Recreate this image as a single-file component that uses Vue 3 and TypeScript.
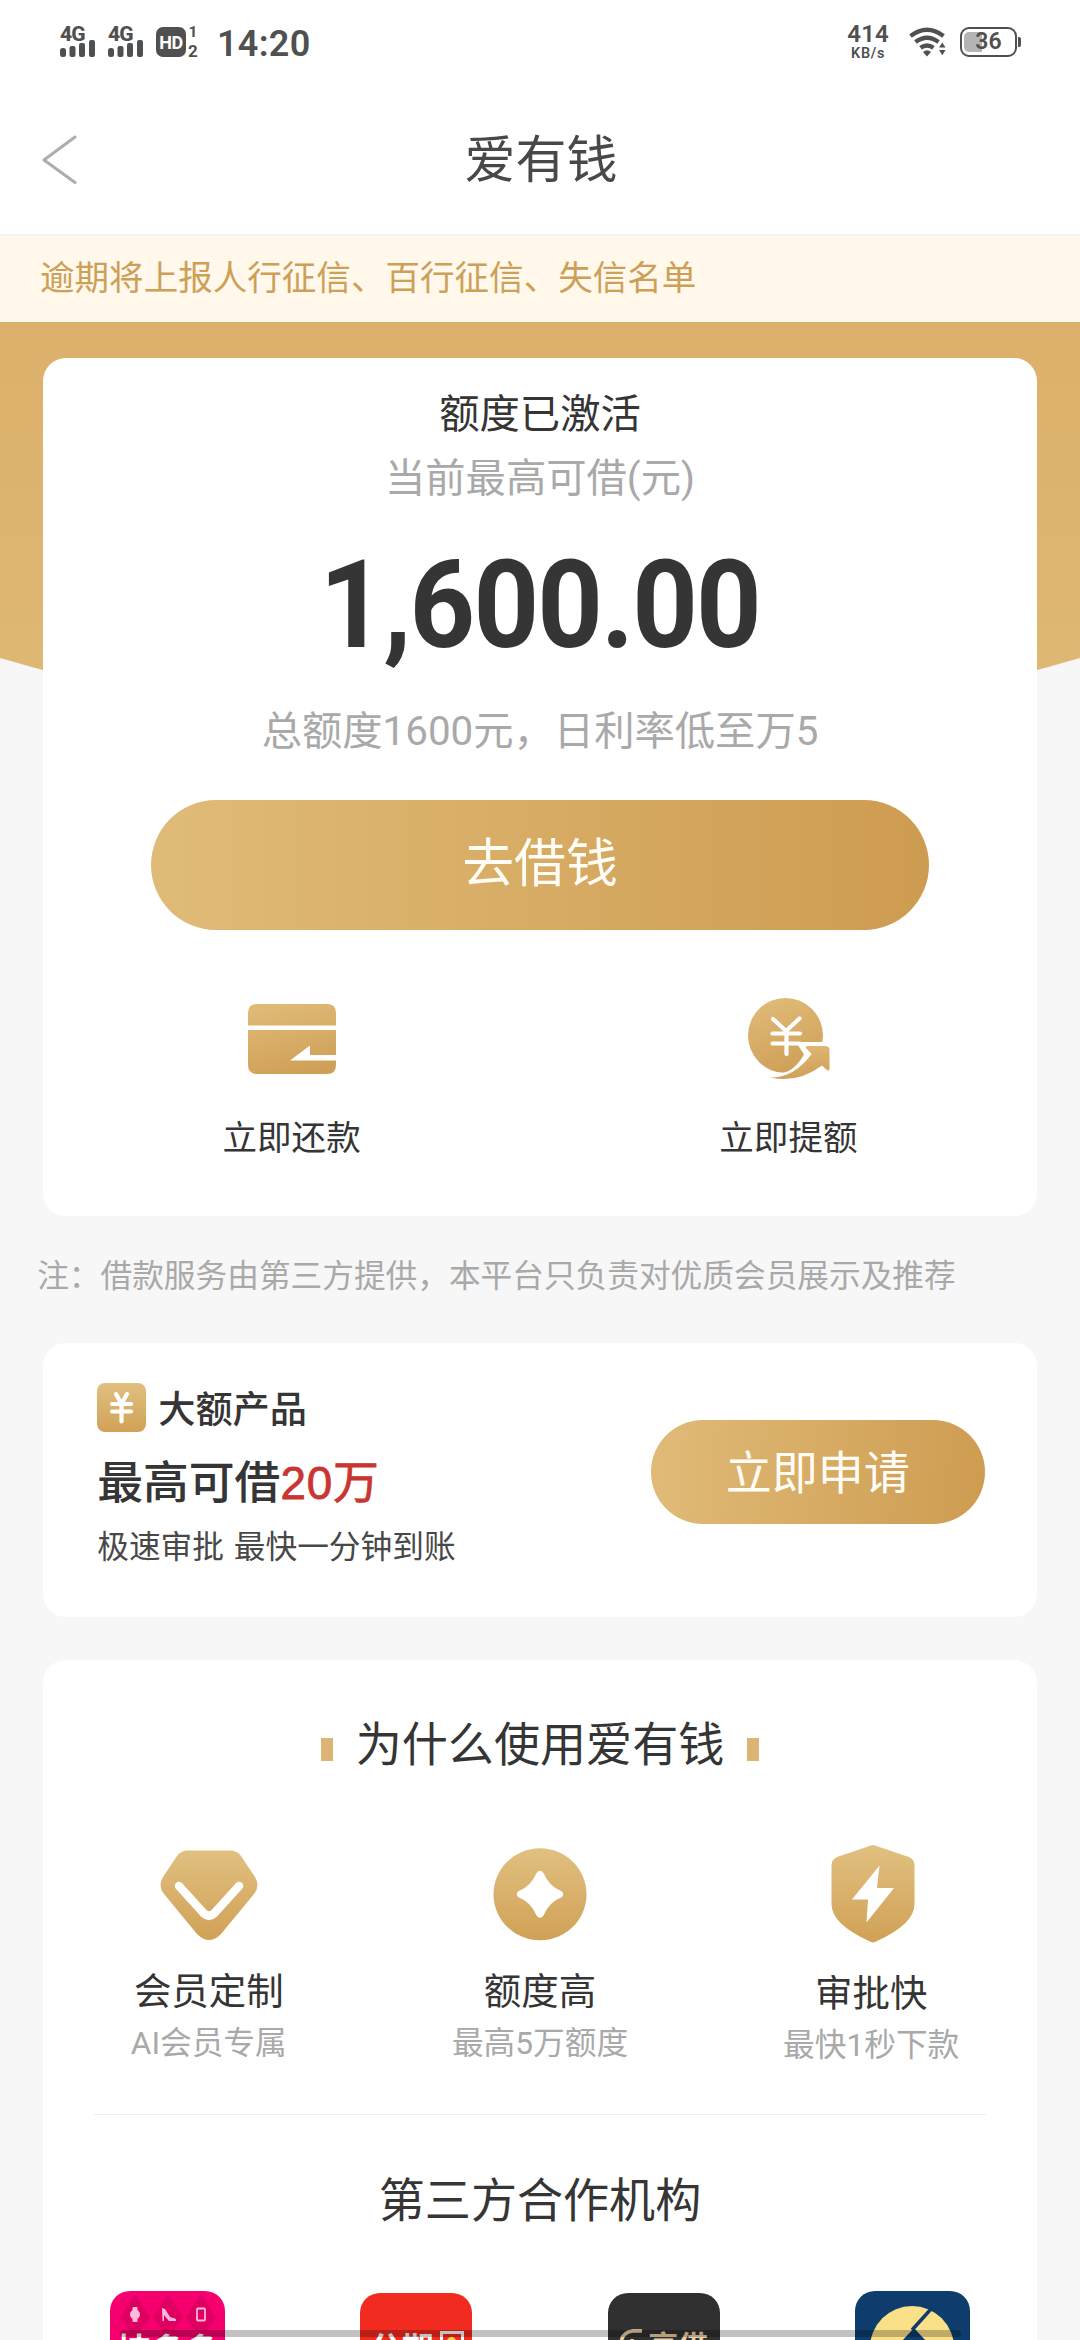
<script setup lang="ts">
interface Benefit {
  icon: 'diamond' | 'star' | 'shield'
  title: string
  note: string
}

const signals: number[] = [1, 2]

const benefits: Benefit[] = [
  { icon: 'diamond', title: '会员定制', note: 'AI会员专属' },
  { icon: 'star', title: '额度高', note: '最高5万额度' },
  { icon: 'shield', title: '审批快', note: '最快1秒下款' },
]
</script>

<template>
  <div class="page">
    <svg class="defs" width="0" height="0" aria-hidden="true">
      <defs>
        <linearGradient id="gold" x1="0.35" y1="0" x2="0.65" y2="1">
          <stop offset="0" stop-color="#dfba76" />
          <stop offset="1" stop-color="#cf9f57" />
        </linearGradient>
        <linearGradient id="goldSoft" x1="0" y1="0" x2="0" y2="1">
          <stop offset="0" stop-color="#e1c080" />
          <stop offset="1" stop-color="#d0a156" />
        </linearGradient>
      </defs>
    </svg>

    <header class="status">
      <div class="status-left">
        <div v-for="s in signals" :key="s" class="signal">
          <span class="net">4G</span>
          <svg class="bars" width="35" height="17" viewBox="0 0 35 17">
            <rect x="0" y="8" width="6" height="9" rx="2.5" />
            <rect x="9.5" y="6" width="6" height="11" rx="2" />
            <rect x="19" y="3" width="6" height="14" rx="2" />
            <rect x="29" y="0" width="6" height="17" rx="2" />
          </svg>
        </div>
        <div class="hd"><span>HD</span></div>
        <div class="sims"><span>1</span><span class="second">2</span></div>
        <span class="clock">14:20</span>
      </div>
      <div class="status-right">
        <div class="speed"><b>414</b><i>KB/s</i></div>
        <svg class="wifi" width="38" height="30" viewBox="0 0 38 30">
          <g fill="none" stroke="#505050" stroke-width="4.300">
            <path d="M1.5 9 Q18 -3.5 34.500 9" />
            <path d="M6.500 15 Q18 6.500 29.500 15" />
            <path d="M11.500 20.800 Q18 16.200 24.500 20.800" />
          </g>
          <path d="M14 25 Q18 21.500 22 25 L18 29.500Z" fill="#505050" />
          <path d="M30 20.500 L33.300 15.500 L36.500 20.500Z M30 23 L33.300 28.200 L36.500 23Z" fill="#505050" />
        </svg>
        <div class="battery"><div class="level"></div><span>36</span></div>
        <div class="nub"></div>
      </div>
    </header>

    <nav class="nav">
      <svg class="back" width="36" height="52" viewBox="0 0 36 52">
        <path d="M33 3 L2 26 L33 48.500" fill="none" stroke="#adadad" stroke-width="3" stroke-linecap="round" stroke-linejoin="round" />
      </svg>
      <h1>爱有钱</h1>
    </nav>

    <div class="notice">逾期将上报人行征信、百行征信、失信名单</div>

    <main class="body">
      <svg class="hero" width="1080" height="420" viewBox="0 0 1080 420">
        <defs>
          <linearGradient id="heroFill" x1="0" y1="0" x2="0" y2="1">
            <stop offset="0" stop-color="#dbb06a" />
            <stop offset="1" stop-color="#dfb976" />
          </linearGradient>
        </defs>
        <path d="M0 0 H1080 V336 Q540 494 0 336Z" fill="url(#heroFill)" />
      </svg>

      <section class="card quota">
        <p class="active">额度已激活</p>
        <p class="hint">当前最高可借(元)</p>
        <p class="amount">1,600.00</p>
        <p class="rate">总额度1600元，日利率低至万5</p>
        <button class="borrow">去借钱</button>
        <div class="actions">
          <div class="action">
            <svg width="90" height="90" viewBox="0 0 90 90">
              <path d="M10 9 H80 Q89 9 89 18 V30.500 H1 V18 Q1 9 10 9Z M1 35 H89 V60 H63 V50.500 L43 65.500 H89 V70 Q89 79 80 79 H10 Q1 79 1 70Z" fill="url(#gold)" />
            </svg>
            <span>立即还款</span>
          </div>
          <div class="action">
            <svg width="90" height="90" viewBox="0 0 90 90">
              <ellipse cx="42.500" cy="40.500" rx="37.500" ry="37.500" fill="url(#gold)" />
              <path d="M26 90 V78 H38 Q51 77 61 59.500 L53 47 H90 V90Z" fill="#fff" />
              <path d="M27 82.500 Q51 83 68.600 59 L62.500 52.500 Q62.500 51 64.500 51 H82 Q86.500 51 86.500 55 V74.500 Q85.500 76 84 75 L79 70.500 Q55 88.500 27 82.500Z" fill="url(#gold)" />
              <path d="M30 24 L43 36 L56.500 23.500 M29.500 38.500 H57 M29.500 48.500 H57 M43.500 36 V59" fill="none" stroke="#fff" stroke-width="4.200" stroke-linecap="round" />
            </svg>
            <span>立即提额</span>
          </div>
        </div>
      </section>

      <p class="remark">注：借款服务由第三方提供，本平台只负责对优质会员展示及推荐</p>

      <section class="card promo">
        <div class="promo-text">
          <div class="promo-head">
            <svg width="49" height="49" viewBox="0 0 49 49">
              <rect width="49" height="49" rx="8" fill="url(#goldSoft)" />
              <path d="M19 11 L24.500 21 L30 11 M15 21 H34 M15 28.500 H34 M24.500 21 V38.500" fill="none" stroke="#fff" stroke-width="4.200" stroke-linecap="round" />
            </svg>
            <span>大额产品</span>
          </div>
          <p class="promo-main">最高可借<em>20万</em></p>
          <p class="promo-sub">极速审批 最快一分钟到账</p>
        </div>
        <button class="apply">立即申请</button>
      </section>

      <section class="card why">
        <h2><i></i><span>为什么使用爱有钱</span><i></i></h2>
        <div class="benefits">
          <div v-for="b in benefits" :key="b.icon" class="benefit" :class="b.icon">
            <svg v-if="b.icon === 'diamond'" width="100" height="100" viewBox="0 0 100 100">
              <path d="M29 6.500 H71 Q78 6.500 82 12 L96 33 Q101.500 42 95 50 L62 90 Q50 102 38 90 L5 50 Q-1.500 42 4 33 L18 12 Q22 6.500 29 6.500Z" fill="url(#goldSoft)" />
              <path d="M20 42 L45 69.500 Q50 74 55 69.500 L80 42" fill="none" stroke="#fff" stroke-width="8.500" stroke-linecap="round" />
            </svg>
            <svg v-else-if="b.icon === 'star'" width="100" height="100" viewBox="0 0 100 100">
              <ellipse cx="50" cy="50.300" rx="46.500" ry="46" fill="url(#goldSoft)" />
              <path d="M46.500 29 Q50 24.500 53.500 29 Q59 42.500 72 47.500 Q74.500 50 72 53 Q59 58 53.500 71.500 Q50 76 46.500 71.500 Q41 58 28 53 Q25.500 50 28 47.500 Q41 42.500 46.500 29Z" fill="#fff" />
            </svg>
            <svg v-else width="100" height="100" viewBox="0 0 100 100">
              <path d="M50 1.600 Q52 .6 54 1.600 L88 13 Q93.500 15.500 93.500 21 V60 Q93.500 80 56 97 Q52 99.800 48 97 Q10.500 80 10.500 60 V21 Q10.500 15.500 16 13Z" fill="url(#goldSoft)" />
              <path d="M58.500 21.500 L56 44 H73 L45.500 78.500 L47 55.500 H31Z" fill="#fff" />
            </svg>
            <strong>{{ b.title }}</strong>
            <small>{{ b.note }}</small>
          </div>
        </div>
        <hr />
        <h3>第三方合作机构</h3>
        <div class="partners">
          <div class="slot">
            <div class="logo pink">
              <svg width="115" height="40" viewBox="0 0 115 40">
                <path d="M25 3 L40 26 L25 48 L10 26Z M58 3 L73 26 L58 48 L43 26Z M91 3 L106 26 L91 48 L76 26Z" fill="#d6005c" opacity=".7" />
                <g fill="#ffb9da">
                  <rect x="22.500" y="16" width="5" height="15" rx="1" />
                  <circle cx="25" cy="23.500" r="5" />
                  <path d="M52 17 L55 18 L60 26 L66 28 V30 H59 L54 24 V30 H52.500Z" />
                </g>
                <rect x="87" y="17.500" width="8" height="12" rx="1" fill="none" stroke="#ffb9da" stroke-width="1.800" />
              </svg>
              <span>桔多多</span>
            </div>
          </div>
          <div class="slot">
            <div class="logo red"><span>分期</span><i><b></b></i></div>
          </div>
          <div class="slot">
            <div class="logo dark">
              <svg width="26" height="26" viewBox="0 0 26 26">
                <path d="M24 2 H15 Q3 3 3 16 M14 10 V20" fill="none" stroke="#ead0a8" stroke-width="3.500" />
              </svg>
              <span>高借</span>
            </div>
          </div>
          <div class="slot">
            <div class="logo navy">
              <svg width="115" height="52" viewBox="0 0 115 52">
                <circle cx="57" cy="57" r="42" fill="#fbe08a" />
                <path d="M59 37 L84 64 H34Z" fill="#0d3c6d" />
                <path d="M76 18 L57 39" fill="none" stroke="#0d3c6d" stroke-width="3.500" />
              </svg>
            </div>
          </div>
        </div>
      </section>
    </main>

    <div class="home-bar"></div>
  </div>
</template>

<style>
body {
  margin: 0;
  background: #f7f7f7;
}
</style>

<style scoped>
.page {
  position: relative;
  width: 1080px;
  height: 2340px;
  overflow: hidden;
  background: #f7f7f7;
  color: #353535;
  font-family: Roboto, "Noto Sans CJK SC", sans-serif;
}
.defs {
  position: absolute;
}
p, h1, h2, h3 {
  margin: 0;
  font-weight: 400;
}
svg {
  display: block;
  flex: none;
}
button {
  border: 0;
  padding: 0;
  color: #fffdf5;
  font-family: inherit;
}

/* status bar */
.status {
  display: flex;
  justify-content: space-between;
  height: 84px;
  padding: 0 59px 0 60px;
  background: #fff;
  color: #505050;
}
.status-left,
.status-right {
  display: flex;
  align-items: center;
}
.signal {
  width: 35px;
  height: 30px;
  margin-right: 13px;
}
.net {
  display: block;
  height: 14px;
  font-size: 21px;
  font-weight: 800;
  line-height: 15px;
  letter-spacing: -0.8px;
}
.bars {
  margin-top: -1px;
  fill: #505050;
}
.hd {
  width: 30px;
  height: 30px;
  border-radius: 7px;
  background: #505050;
  color: #fff;
  font-size: 18px;
  font-weight: 700;
  line-height: 31px;
  text-align: center;
  letter-spacing: -0.5px;
}
.sims {
  display: flex;
  flex-direction: column;
  justify-content: space-between;
  width: 10px;
  height: 30px;
  margin-left: 2px;
  font-size: 15.500px;
  font-weight: 700;
  line-height: 11px;
  text-align: center;
}
.sims .second {
  font-size: 17px;
}
.clock {
  margin-left: 19px;
  font-size: 36px;
  font-weight: 600;
  line-height: 84px;
  letter-spacing: 0.3px;
  padding-top: 3px;
}
.speed {
  display: flex;
  flex-direction: column;
  align-items: center;
  margin-right: 20px;
}
.speed b {
  font-size: 24px;
  font-weight: 600;
  line-height: 19px;
  letter-spacing: 0.2px;
}
.speed i {
  margin-top: 3px;
  font-size: 14.500px;
  font-style: normal;
  font-weight: 600;
  line-height: 13px;
  letter-spacing: 0.7px;
}
.battery {
  position: relative;
  box-sizing: border-box;
  width: 57px;
  height: 30px;
  margin-left: 13px;
  padding: 3px 0 0 2px;
  border: 2.500px solid #505050;
  border-radius: 9px;
}
.level {
  width: 18px;
  height: 20px;
  border-radius: 5px 0 0 5px;
  background: #b4b4b4;
}
.battery span {
  position: absolute;
  inset: 0;
  font-size: 23px;
  font-weight: 600;
  line-height: 26px;
  text-align: center;
}
.nub {
  width: 3px;
  height: 10px;
  margin-left: 1px;
  border-radius: 0 2px 2px 0;
  background: #505050;
}

/* title bar */
.nav {
  display: grid;
  grid-template-columns: 120px 1fr 120px;
  align-items: center;
  height: 150px;
  border-bottom: 2px solid #f3f4f4;
  background: #fff;
}
.back {
  margin: 2px 0 0 42px;
}
h1 {
  padding: 4px 0 0 2px;
  font-size: 51px;
  line-height: 146px;
  text-align: center;
  color: #484848;
}
.notice {
  height: 86px;
  padding-left: 40px;
  background: #fff8eb;
  color: #cda058;
  font-size: 34.560px;
  line-height: 84px;
}

/* content */
.body {
  position: relative;
  padding: 36px 43.200px 0;
}
.hero {
  position: absolute;
  top: 0;
  left: 0;
}
.card {
  position: relative;
  box-sizing: border-box;
  border-radius: 23px;
  background: #fff;
}
.quota {
  display: flex;
  flex-direction: column;
  align-items: center;
  height: 858px;
  padding-top: 25px;
}
.active,
.hint,
.rate {
  font-size: 40.320px;
  line-height: 64px;
}
.hint,
.rate {
  color: #a9a9a9;
}
.amount {
  margin-top: 23px;
  font-size: 122px;
  font-weight: 700;
  line-height: 144px;
  letter-spacing: -2px;
  transform: scaleX(0.938);
}
.rate {
  margin-top: 22px;
}
.borrow {
  box-sizing: border-box;
  width: 778px;
  height: 130px;
  margin-top: 36px;
  border-radius: 65px;
  background: linear-gradient(90deg, #e0bb78, #ce9c51);
  font-size: 51.840px;
  line-height: 128px;
}
.actions {
  display: flex;
  width: 100%;
  margin-top: 65px;
}
.action {
  display: flex;
  flex: 1;
  flex-direction: column;
  align-items: center;
}
.action span {
  margin-top: 28px;
  font-size: 34.560px;
  line-height: 50px;
}
.remark {
  margin: 36px -10px 0 -6px;
  font-size: 31.680px;
  line-height: 50px;
  white-space: nowrap;
  color: #a9a9a9;
}
.promo {
  display: flex;
  justify-content: space-between;
  height: 274px;
  margin-top: 41px;
  padding: 40px 52px 0 54px;
}
.promo-head {
  display: flex;
  align-items: center;
  gap: 12px;
  height: 49px;
  font-size: 37.200px;
  font-weight: 500;
}
.promo-head span {
  margin-top: -2px;
}
.promo-main {
  margin-top: 22px;
  font-family: "Liberation Sans", "Noto Sans CJK SC", sans-serif;
  font-size: 45.800px;
  font-weight: 500;
  line-height: 60px;
}
.promo-main em {
  font-style: normal;
  font-weight: 400;
  letter-spacing: 0.8px;
  color: #c93632;
  -webkit-text-stroke: 0.8px #c93632;
}
.promo-sub {
  margin-top: 10px;
  color: #484848;
  font-size: 31.700px;
  line-height: 48px;
  word-spacing: 2px;
}
.apply {
  width: 334px;
  height: 104px;
  margin-top: 37px;
  border-radius: 52px;
  background: linear-gradient(95deg, #e0bb78, #ce9c51);
  font-size: 46px;
  line-height: 106px;
}
.why {
  height: 800px;
  margin-top: 43px;
  padding-top: 50px;
}
h2 {
  display: flex;
  align-items: center;
  justify-content: center;
  gap: 23px;
  height: 66px;
  font-size: 46.080px;
  line-height: 66px;
}
h2 span {
  padding-top: 3px;
}
h2 i {
  width: 12px;
  height: 23px;
  margin-top: 12px;
  background: #dcb474;
}
.benefits {
  display: flex;
  margin-top: 68px;
}
.benefit {
  display: flex;
  flex: 1;
  flex-direction: column;
  align-items: center;
}
.benefit strong {
  margin-top: 23px;
  font-size: 37.440px;
  font-weight: 400;
  line-height: 50px;
}
.benefit small {
  margin-top: 4px;
  color: #a9a9a9;
  font-size: 31.680px;
  line-height: 46px;
}
.shield strong {
  margin-top: 25px;
}
hr {
  height: 1px;
  margin: 45px 51px 0;
  border: 0;
  background: #ececec;
}
h3 {
  margin-top: 53px;
  font-size: 46.080px;
  line-height: 66px;
  text-align: center;
}
.partners {
  display: flex;
  margin-top: 57px;
}
.slot {
  display: flex;
  flex: 1;
  justify-content: center;
}
.logo {
  box-sizing: border-box;
  width: 112px;
  height: 112px;
  margin-top: 2px;
  border-radius: 20px;
  overflow: hidden;
  color: #fff;
  font-weight: 700;
}
.pink {
  width: 115px;
  height: 115px;
  margin-top: 0;
  background: #f5006e;
  font-size: 34px;
  line-height: 40px;
  text-align: center;
}
.red {
  display: flex;
  gap: 6px;
  padding: 36px 0 0 10px;
  background: #f22b20;
  font-size: 32px;
  line-height: 40px;
}
.red i {
  width: 18px;
  height: 24px;
  margin-top: 2px;
  border: 3px solid #fff;
}
.red b {
  display: block;
  width: 9px;
  height: 9px;
  margin: 3px auto;
  border-radius: 50%;
  background: #ffd34a;
}
.dark {
  display: flex;
  gap: 4px;
  padding: 34px 0 0 10px;
  background: #303030;
  color: #ead0a8;
  font-size: 30px;
  line-height: 40px;
}
.dark svg {
  margin-top: 2px;
}
.navy {
  width: 115px;
  height: 115px;
  margin-top: 0;
  background: #0d3c6d;
}
.home-bar {
  position: absolute;
  bottom: 3px;
  left: 120px;
  width: 841px;
  height: 7px;
  border-radius: 4px;
  background: rgba(0, 0, 0, 0.24);
}
</style>
